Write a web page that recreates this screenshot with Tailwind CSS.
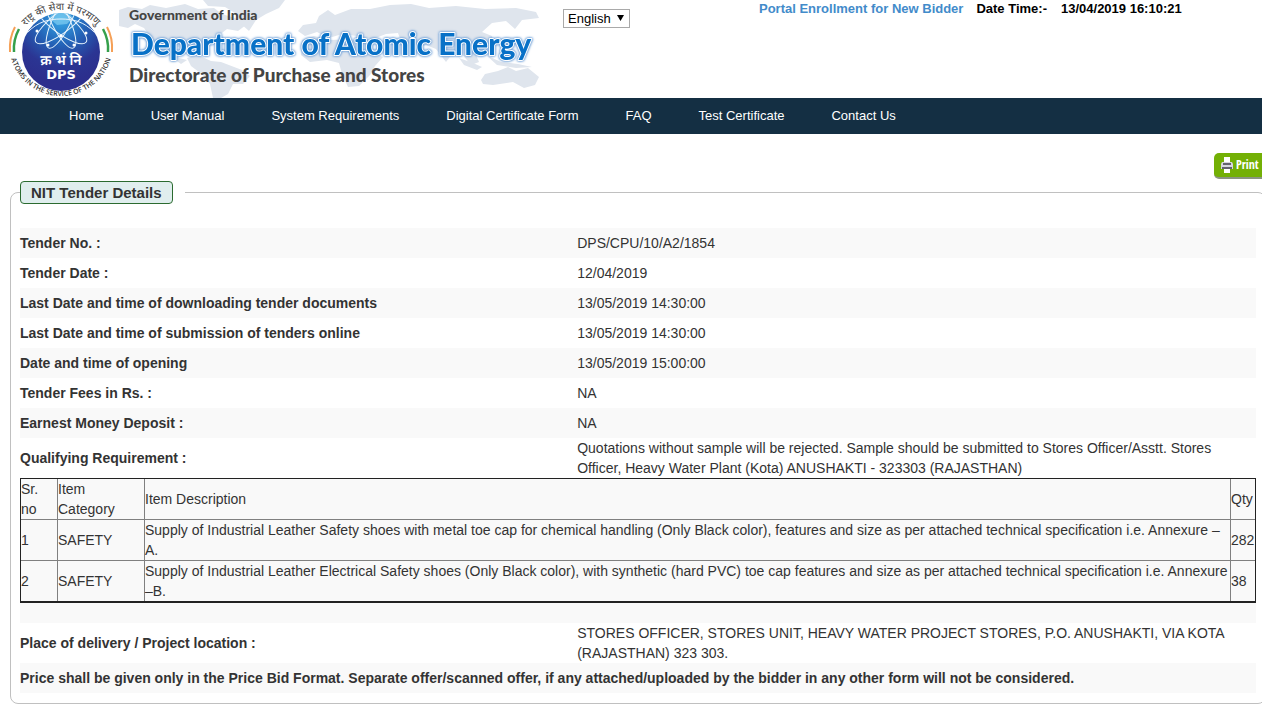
<!DOCTYPE html>
<html lang="en">
<head>
<meta charset="utf-8">
<title>NIT Tender Details</title>
<script src="https://cdn.jsdelivr.net/npm/@tailwindcss/browser@4"></script>
</head>
<body class="bg-white font-['Liberation_Sans',Arial,sans-serif] text-sm leading-5 text-[#333] overflow-x-hidden">
<header class="flex h-[98px] items-start">
  <svg class="block h-[98px] w-[550px] shrink-0" viewBox="0 0 550 98" role="img" aria-label="Government of India, Department of Atomic Energy, Directorate of Purchase and Stores">
    <defs>
      <radialGradient id="globe" cx="50%" cy="8%" r="80%"><stop offset="0" stop-color="#35a8e6"/><stop offset=".4" stop-color="#2464b8"/><stop offset=".75" stop-color="#2b3593"/><stop offset="1" stop-color="#2c2f8d"/></radialGradient>
      <clipPath id="disc"><circle cx="61" cy="52" r="39"/></clipPath>
      <path id="topArc" d="M20 34A47 47 0 0 1 102 34"/>
      <path id="bottomArc" d="M9 44A52 52 0 0 0 113 44"/>
    </defs>
    <g fill="#dfe5ed">
      <path d="M119 10L128 7L142 9L150 5L166 8L185 4L198 9L214 8L222 14L235 18L246 25L238 31L227 29L218 36L206 38L199 46L190 45L186 51L178 47L171 51L179 58L187 60L181 64L170 56L158 50L151 38L144 28L135 24L128 28L119 26Z"/>
      <path d="M203 0L285 0L279 8L266 14L256 20L249 31L240 23L235 13L225 7L208 6Z"/>
      <path d="M187 58L198 55L211 61L221 62L242 70L250 76L243 84L233 84L228 94L221 98L213 98L210 84L203 75L191 66Z"/>
      <path d="M298 31L303 25L316 23L319 16L328 10L335 15L351 9L370 9L390 5L411 4L429 8L456 6L485 9L516 8L536 12L539 18L522 20L515 29L506 21L492 23L482 32L492 36L493 46L482 51L474 50L479 62L471 65L462 54L455 50L446 62L436 49L426 45L414 50L402 44L398 33L386 34L373 39L357 36L342 34L329 38L317 32L305 36Z"/>
      <path d="M302 40L314 36L331 40L350 39L367 43L374 53L383 57L375 66L370 75L359 86L348 87L342 74L339 63L327 60L310 62L301 55Z"/>
      <path d="M481 80L485 74L498 71L508 67L516 71L528 68L539 77L535 85L524 88L513 82L493 85L483 84Z"/>
      <path d="M459 58L473 63L482 67L477 70L464 65ZM486 55L501 62L518 64L532 67L516 68L497 65Z"/>
    </g>
    <circle cx="61" cy="46" r="53" fill="#fff"/>
    <circle cx="61" cy="52" r="39" fill="url(#globe)"/>
    <g clip-path="url(#disc)">
      <path d="M49 18L54 12H68L73 18L67 24L57 25Z" fill="#8dd6f4" opacity=".6"/>
      <g fill="none" stroke="#e6f3fc" stroke-width="1">
        <ellipse cx="62" cy="22" rx="33" ry="10" transform="rotate(-38 62 22)"/>
        <ellipse cx="60" cy="22" rx="33" ry="10" transform="rotate(38 60 22)"/>
        <ellipse cx="62" cy="20" rx="31" ry="9" transform="rotate(-64 62 20)"/>
        <ellipse cx="60" cy="20" rx="31" ry="9" transform="rotate(64 60 20)"/>
        <path d="M27 33C38 21 50 19 61 19C72 19 84 21 95 33"/>
      </g>
      <g fill="#fff"><circle cx="37" cy="31" r="1.500"/><circle cx="48" cy="45" r="1.500"/><circle cx="74" cy="45" r="1.500"/><circle cx="86" cy="33" r="1.500"/><circle cx="61" cy="36" r="1.500"/></g>
    </g>
    <g fill="none" stroke-width="2">
      <path d="M15 27Q9 38 10 52" stroke="#f5a057"/><path d="M19 29Q13 40 14 52" stroke="#35a04b" stroke-width="2.500"/>
      <path d="M107 27Q113 38 112 52" stroke="#f5a057"/><path d="M103 29Q109 40 108 52" stroke="#35a04b" stroke-width="2.500"/>
    </g>
    <text class="font-['Noto_Sans_Devanagari','Noto_Sans',sans-serif] text-[10px]" fill="#444"><textPath href="#topArc" startOffset="50%" text-anchor="middle">राष्ट्र की सेवा में परमाणु</textPath></text>
    <text class="font-['Open_Sans',sans-serif] text-[7px] font-semibold" fill="#333"><textPath href="#bottomArc" startOffset="50%" text-anchor="middle">ATOMS IN THE SERVICE OF THE NATION</textPath></text>
    <text x="61" y="65" text-anchor="middle" class="font-['Noto_Sans_Devanagari','Noto_Sans',sans-serif] text-[14px] font-semibold" fill="#fff">क्र भं नि</text>
    <text x="61" y="79" text-anchor="middle" class="font-['DejaVu_Sans',sans-serif] text-[13px] font-bold" fill="#fff">DPS</text>
    <g class="font-['Lato',sans-serif] font-black">
      <text x="129" y="20" class="text-[14px]" fill="#444">Government of India</text>
      <text x="131" y="55" class="text-[30px] [filter:drop-shadow(0_0_1px_#5b93d2)_drop-shadow(0_0_1px_#8bb2df)]" fill="#0871c7" stroke="#fff" stroke-width="2" stroke-linejoin="round" paint-order="stroke">Department of Atomic Energy</text>
      <text x="129" y="82" class="text-[19px]" fill="#444">Directorate of Purchase and Stores</text>
    </g>
  </svg>
  <div class="relative mt-[9px] ml-[13px] h-[19px] w-[67px] shrink-0">
    <select aria-label="Language" class="block h-full w-full appearance-none border border-[#a9a9a9] bg-white pl-1 text-[13px] leading-4 text-black"><option>English</option><option>Hindi</option></select>
    <svg class="pointer-events-none absolute top-[6px] right-[6px] h-[6px] w-[7px]" viewBox="0 0 7 6"><path d="M0 0H7L3.500 6Z" fill="#000"/></svg>
  </div>
  <div class="ml-[129px] flex shrink-0 pt-px text-[13px] leading-4 font-bold text-black">
    <a href="#" class="text-[#428bca]">Portal Enrollment for New Bidder</a>
    <span class="ml-[13px]">Date Time:-</span>
    <time class="ml-[14px]">13/04/2019 16:10:21</time>
  </div>
</header>
<nav class="flex h-9 items-center gap-[47px] bg-[#142f43] pl-[69px] text-[13px] text-white">
  <a href="#">Home</a><a href="#">User Manual</a><a href="#">System Requirements</a><a href="#">Digital Certificate Form</a><a href="#">FAQ</a><a href="#">Test Certificate</a><a href="#">Contact Us</a>
</nav>
<main class="pt-[19px]">
  <div class="flex justify-end">
    <button class="flex h-[26px] w-12 items-center gap-[3px] rounded-l-[5px] border-b-2 border-[#8a9580] bg-[#73b005] pl-[7px] text-white">
      <svg class="h-4 w-3 shrink-0" viewBox="0 0 12 16"><path d="M3 0H9V6H3Z" fill="#fff"/><path d="M1 5H11L12 7V12H0V7Z" fill="#d6d6df"/><path d="M2 6H10V8H2ZM1 10H11V12H1Z" fill="#62626e"/><path d="M3 12H9V16H3Z" fill="#fff"/></svg>
      <span class="font-['Open_Sans_Condensed','Open_Sans',sans-serif] text-xs leading-4 font-bold">Print</span>
    </button>
  </div>
  <fieldset class="mt-[2px] -mr-1 ml-[10px] rounded-[8px] border border-[#c0c0c0] pr-[9px] pb-[10px] pl-[9px]">
    <legend class="pr-3"><span class="block rounded-[4px] border border-[#2b6b30] bg-[#e0eeee] px-[10px] text-[15px] leading-[21px] font-bold">NIT Tender Details</span></legend>
    <table class="mt-6 w-full table-fixed border-collapse [&_th]:p-0 [&_th]:text-left">
      <colgroup><col class="w-[45%]"><col></colgroup>
      <tbody>
        <tr class="h-[30px] bg-[#f9f9f9]"><th scope="row">Tender No. :</th><td class="pl-px">DPS/CPU/10/A2/1854</td></tr>
        <tr class="h-[30px]"><th scope="row">Tender Date :</th><td class="pl-px">12/04/2019</td></tr>
        <tr class="h-[30px] bg-[#f9f9f9]"><th scope="row">Last Date and time of downloading tender documents</th><td class="pl-px">13/05/2019 14:30:00</td></tr>
        <tr class="h-[30px]"><th scope="row">Last Date and time of submission of tenders online</th><td class="pl-px">13/05/2019 14:30:00</td></tr>
        <tr class="h-[30px] bg-[#f9f9f9]"><th scope="row">Date and time of opening</th><td class="pl-px">13/05/2019 15:00:00</td></tr>
        <tr class="h-[30px]"><th scope="row">Tender Fees in Rs. :</th><td class="pl-px">NA</td></tr>
        <tr class="h-[30px] bg-[#f9f9f9]"><th scope="row">Earnest Money Deposit :</th><td class="pl-px">NA</td></tr>
        <tr><th scope="row">Qualifying Requirement :</th><td class="pr-5 pl-px">Quotations without sample will be rejected. Sample should be submitted to Stores Officer/Asstt. Stores Officer, Heavy Water Plant (Kota) ANUSHAKTI - 323303 (RAJASTHAN)</td></tr>
        <tr class="bg-[#f9f9f9]"><td colspan="2" class="pb-5">
          <div class="border-b border-[#222]">
          <table class="w-full table-fixed border-collapse outline outline-[#222] -outline-offset-1 [&_td]:border [&_td]:border-[#808080] [&_th]:border [&_th]:border-[#808080] [&_th]:font-normal">
            <colgroup><col class="w-[37px]"><col class="w-[87px]"><col><col class="w-[25px]"></colgroup>
            <thead><tr><th scope="col">Sr. no</th><th scope="col">Item Category</th><th scope="col">Item Description</th><th scope="col">Qty</th></tr></thead>
            <tbody>
              <tr><td>1</td><td>SAFETY</td><td>Supply of Industrial Leather Safety shoes with metal toe cap for chemical handling (Only Black color), features and size as per attached technical specification i.e. Annexure –A.</td><td>282</td></tr>
              <tr><td>2</td><td>SAFETY</td><td>Supply of Industrial Leather Electrical Safety shoes (Only Black color), with synthetic (hard PVC) toe cap features and size as per attached technical specification i.e. Annexure –B.</td><td>38</td></tr>
            </tbody>
          </table>
          </div>
        </td></tr>
        <tr><th scope="row">Place of delivery / Project location :</th><td class="pr-5 pl-px">STORES OFFICER, STORES UNIT, HEAVY WATER PROJECT STORES, P.O. ANUSHAKTI, VIA KOTA (RAJASTHAN) 323 303.</td></tr>
        <tr class="h-[30px] bg-[#f9f9f9]"><td colspan="2" class="font-bold">Price shall be given only in the Price Bid Format. Separate offer/scanned offer, if any attached/uploaded by the bidder in any other form will not be considered.</td></tr>
      </tbody>
    </table>
  </fieldset>
</main>
</body>
</html>
